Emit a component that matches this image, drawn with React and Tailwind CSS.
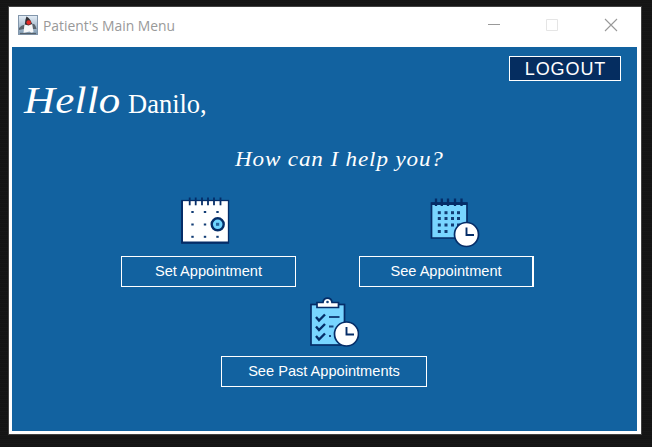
import React from "react";

const sans = "font-['Liberation_Sans',Arial,sans-serif]";

function DukeIcon() {
  return (
    <svg className="shrink-0" width="20" height="20" viewBox="0 0 20 20">
      <defs>
        <linearGradient id="duke" x1="0" y1="0" x2="0" y2="1">
          <stop offset="0" stopColor="#e4edf6" />
          <stop offset="1" stopColor="#7f9ab2" />
        </linearGradient>
      </defs>
      <rect x=".5" y=".5" width="19" height="19" fill="url(#duke)" stroke="#8296ab" />
      <path d="M1 13 Q3 10 7 9.500 L6 14 L1 15Z M13 9 Q16.500 8 17.500 11 L18.500 14 L14 14Z" fill="#59646d" />
      <path d="M9 2 Q12 4 14 8 L15.500 17 Q13 18.500 11.500 16.500 L5.500 18 Q6 9 9 2Z" fill="#f5f6f7" />
      <path d="M8.500 1.500 Q12.500 3.500 14.200 9 L10.500 10.500 L6.800 9.500 Q7 5 8.500 1.500Z" fill="#303035" />
      <circle cx="10.700" cy="7.500" r="2.300" fill="#e52925" />
      <path d="M2 18.500h16" stroke="#56616a" strokeWidth="1.200" />
    </svg>
  );
}

function Clock({ cx, cy }) {
  return (
    <g>
      <circle cx={cx} cy={cy} r="12" fill="#fff" stroke="#052d68" strokeWidth="1.700" />
      <path d={`M${cx} ${cy - 7}v7.500h7.500`} fill="none" stroke="#052d68" strokeWidth="1.900" />
    </g>
  );
}

function CalendarIcon() {
  return (
    <svg width="50" height="50" viewBox="0 0 50 50">
      <rect x="2" y="3.500" width="46.500" height="42.500" fill="#fff" stroke="#052d68" strokeWidth="1.300" />
      <path d="M1 45.500h48" stroke="#052d68" strokeWidth="2.200" />
      <path d="M2 3.500v42" stroke="#052d68" strokeWidth="2" />
      {[9.700, 15.700, 22, 28, 34, 40.500].map((x) => (
        <path key={x} d={`M${x} .5v7.800`} stroke="#052d68" strokeWidth="1.800" />
      ))}
      {[15, 27.500, 39.800].map((y) =>
        [12.500, 25, 37.500].map((x) => (
          <rect key={`${x}-${y}`} x={x - 1.200} y={y - 1} width="2.400" height="2" fill="#123d75" />
        ))
      )}
      <circle cx="37.700" cy="27.300" r="6" fill="#70d5ff" stroke="#052d68" strokeWidth="2.400" />
      <rect x="36" y="25.800" width="3.200" height="3" fill="#24649e" />
    </svg>
  );
}

function CalendarClockIcon() {
  return (
    <svg width="50" height="50" viewBox="0 0 50 50">
      <path d="M1.500 5h35.500v35h-35.500z" fill="#78d5ff" stroke="#052d68" strokeWidth="1.700" />
      <path d="M1.500 5.800h35.500" stroke="#052d68" strokeWidth="2.600" />
      {[6, 11.800, 18, 25, 31.500].map((x) => (
        <path key={x} d={`M${x} .5v7.500`} stroke="#052d68" strokeWidth="2.300" />
      ))}
      {[14.700, 20.500, 27, 33.500].map((y) =>
        [9.300, 16, 22.500, 28.500].filter((x) => y < 32 || x < 20).map((x) => (
          <rect key={`${x}-${y}`} x={x - 1.500} y={y - 1.500} width="3" height="3" fill="#123d75" />
        ))
      )}
      <Clock cx={36.500} cy={36.500} />
    </svg>
  );
}

function ClipboardClockIcon() {
  return (
    <svg width="50" height="50" viewBox="0 0 50 50">
      <rect x="2" y="7.500" width="33.500" height="40.500" fill="#78d5ff" stroke="#052d68" strokeWidth="1.700" />
      <path d="M8 10.500V5.500h6Q14.500 1.200 18.500 1.200T23 5.500h6.500V10.500z" fill="#fff" stroke="#052d68" strokeWidth="1.700" />
      <circle cx="18.500" cy="5" r="1.300" fill="#16427a" />
      {[20, 29.500, 39].map((y) => (
        <path key={y} d={`M7 ${y}l3 3.500 6-6`} fill="none" stroke="#052d68" strokeWidth="2.400" />
      ))}
      <path d="M20 20h10.500M20 29.500h4.500M20 39h2" stroke="#174780" strokeWidth="1.900" />
      <Clock cx={37.500} cy={37} />
    </svg>
  );
}

function MenuButton({ children, className }) {
  return (
    <button className={`${sans} h-[31px] border border-white text-[14.6px] leading-none text-white whitespace-nowrap ${className}`}>
      {children}
    </button>
  );
}

export default function App() {
  return (
    <div className="h-[447px] w-[652px] overflow-hidden bg-[#151515] bg-[repeating-linear-gradient(0deg,#111_0px,#171717_1px,#141414_3px,#1b1b1b_4px)] pt-[6px] pl-[8px]">
      <main className="h-[429px] w-[634px] border border-[#414141] bg-white">
        <header className="flex h-10 items-start pt-2 pl-[9px]">
          <DukeIcon />
          <h1 className="ml-[5px] w-[440px] shrink-0 origin-left scale-x-[0.925] font-['Open_Sans','Noto_Sans',sans-serif] text-[15px] leading-[21px] text-[#999]">
            Patient's Main Menu
          </h1>
          <svg className="mt-[3px] ml-[5px] shrink-0" width="130" height="14" viewBox="0 0 130 14" fill="none">
            <path d="M0 6.500h12" stroke="#999" />
            <path d="M58.500 1.500h11v11h-11z" stroke="#e5e5e5" />
            <path d="M117 1l12 12M129 1l-12 12" stroke="#999" strokeWidth="1.100" />
          </svg>
        </header>
        <section className="ml-[3px] h-[384px] w-[625px] bg-[#1262a0] text-white">
          <div className="flex h-[34px] justify-end pt-[9px] pr-4">
            <button className={`${sans} h-[25px] w-[112px] border border-white bg-[#052d60] pl-px text-[18px] leading-none tracking-[0.9px]`}>
              LOGOUT
            </button>
          </div>
          <div className="flex h-[50px] items-baseline pl-3 font-['Liberation_Serif',serif]">
            <span className="w-[104px] origin-left scale-x-[1.16] text-[37px] leading-[40px] tracking-[0.2px] italic">Hello</span>
            <span className="text-[26.5px] leading-[40px]">Danilo,</span>
          </div>
          <h2 className="mt-[15px] ml-[223px] h-[51px] w-[190px] origin-left scale-x-[1.1] font-['Liberation_Serif',serif] text-[21px] leading-[26px] tracking-[0.78px] whitespace-nowrap italic">
            How can I help you?
          </h2>
          <div className="flex gap-[63px] pl-[109px]">
            <div className="flex w-[175px] flex-col">
              <div className="h-[59px] pl-[59px]"><CalendarIcon /></div>
              <MenuButton className="w-[175px]">Set Appointment</MenuButton>
            </div>
            <div className="flex w-[175px] flex-col">
              <div className="h-[59px] pt-px pl-[71px]"><CalendarClockIcon /></div>
              <MenuButton className="w-[175px] border-r-2">See Appointment</MenuButton>
            </div>
          </div>
          <div className="mt-[10px] ml-[209px] flex w-[206px] flex-col">
            <div className="h-[59px] pl-[88px]"><ClipboardClockIcon /></div>
            <MenuButton className="w-[206px]">See Past Appointments</MenuButton>
          </div>
        </section>
      </main>
    </div>
  );
}
